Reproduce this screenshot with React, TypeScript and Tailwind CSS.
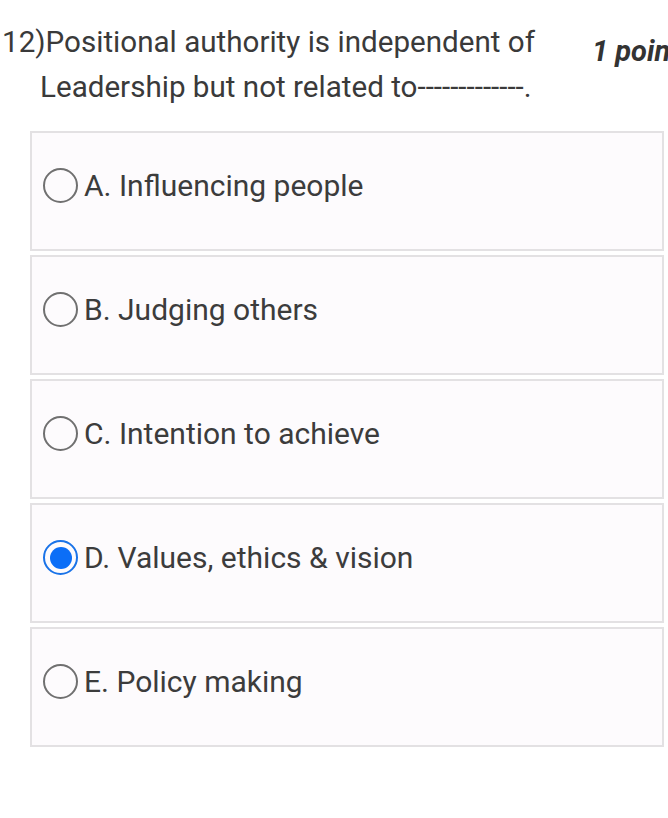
const options = [
  { id: 'A', label: 'A. Influencing people' },
  { id: 'B', label: 'B. Judging others' },
  { id: 'C', label: 'C. Intention to achieve' },
  { id: 'D', label: 'D. Values, ethics & vision' },
  { id: 'E', label: 'E. Policy making' },
];

function Radio({ checked }: { checked: boolean }) {
  if (checked) {
    return (
      <div className="w-[35px] h-[35px] rounded-full border-[2.5px] border-[#1a73e8] flex items-center justify-center shrink-0">
        <div className="w-[22px] h-[22px] rounded-full bg-[#0b6ef7]"></div>
      </div>
    );
  }
  return <div className="w-[35px] h-[35px] rounded-full border-2 border-[#707070] shrink-0"></div>;
}

export default function App() {
  const selected = 'D';
  return (
    <div className="w-[668px] h-[818px] bg-white overflow-hidden font-['Roboto',sans-serif] text-[#3a3a3a]">
      <div className="flex items-start pt-[20px] whitespace-nowrap overflow-hidden">
        <div className="pl-[2px] text-[29.6px] leading-[45px] w-[592px] shrink-0">
          <div>12)Positional authority is independent of</div>
          <div className="pl-[38px]">Leadership but not related to-------------.</div>
        </div>
        <div className="text-[29px] leading-[62px] font-bold italic text-[#333333] shrink-0">1 point</div>
      </div>
      <div className="flex flex-col gap-[4px] pl-[30px] w-[664px] mt-[21px]">
        {options.map((o) => (
          <div key={o.id} className="h-[120px] border-2 border-[#e3e1e3] bg-[#fdfbfd] flex items-start pt-[35px] pl-[11px] gap-[6px]">
            <Radio checked={o.id === selected} />
            <span className="text-[30px] leading-[35px] text-[#3c3c3c]">{o.label}</span>
          </div>
        ))}
      </div>
    </div>
  );
}
